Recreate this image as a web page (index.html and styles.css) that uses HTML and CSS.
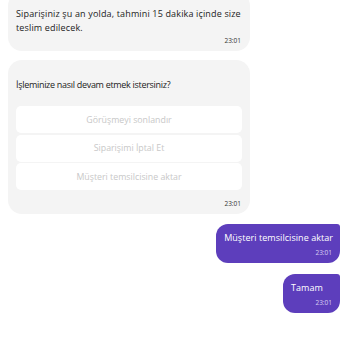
FILE: index.html
```html
<!DOCTYPE html>
<html lang="tr">
<head>
<meta charset="utf-8">
<link rel="stylesheet" href="styles.css">
</head>
<body>
<div class="chat">
  <div class="bubble in first">
    <p class="msg">Siparişiniz şu an yolda, tahmini 15 dakika içinde size teslim edilecek.</p>
    <div class="time">23:01</div>
  </div>
  <div class="bubble in question">
    <p class="msg q">İşleminize nasıl devam etmek istersiniz?</p>
    <div class="options">
      <div class="opt">Görüşmeyi sonlandır</div>
      <div class="opt">Siparişimi İptal Et</div>
      <div class="opt">Müşteri temsilcisine aktar</div>
    </div>
    <div class="time">23:01</div>
  </div>
  <div class="bubble out">
    <p class="msg">Müşteri temsilcisine aktar</p>
    <div class="time">23:01</div>
  </div>
  <div class="bubble out">
    <p class="msg">Tamam</p>
    <div class="time">23:01</div>
  </div>
</div>
</body>
</html>
```
FILE: styles.css
```css
html, body {
  margin: 0;
  padding: 0;
  background: #ffffff;
}
body {
  font-family: "Open Sans", "Liberation Sans", sans-serif;
  color: #222;
  width: 350px;
  height: 350px;
  overflow: hidden;
}
.chat {
  display: flex;
  flex-direction: column;
  padding: 0 10px 0 8px;
  margin-top: -8px;
}
.bubble {
  border-radius: 14px;
  box-sizing: border-box;
}
.bubble.in {
  background: #f4f4f4;
  width: 242px;
  padding: 15px 8px 5px 8px;
}
.bubble.question {
  margin-top: 9px;
  padding-top: 18px;
  padding-bottom: 5px;
}
.msg {
  margin: 0;
  font-size: 9px;
  line-height: 14px;
  letter-spacing: 0.15px;
}
.msg.q {
  margin-bottom: 14px;
  letter-spacing: -0.3px;
}
.time {
  font-size: 6.5px;
  text-align: right;
  color: #333;
  margin-top: 1px;
  padding-right: 1px;
  line-height: 10px;
}
.question .time {
  margin-top: 9px;
}
.options {
  display: flex;
  flex-direction: column;
  gap: 1.5px;
}
.opt {
  background: #fff;
  border-radius: 5px;
  height: 27px;
  display: flex;
  align-items: center;
  justify-content: center;
  font-size: 8.8px;
  color: #c8c8c8;
}
.bubble.out {
  align-self: flex-end;
  min-width: 57px;
  background: #5d3ebc;
  color: #fff;
  padding: 7px 7px 5px 8px;
  border-radius: 12px 3px 12px 12px;
}
.bubble.out .msg {
  letter-spacing: 0.05px;
}
.bubble.out .time {
  color: #d8d0f2;
  margin-top: 3px;
}
.bubble.out + .bubble.out {
  margin-top: 11px;
}
.chat .question + .out {
  margin-top: 10px;
}
```
